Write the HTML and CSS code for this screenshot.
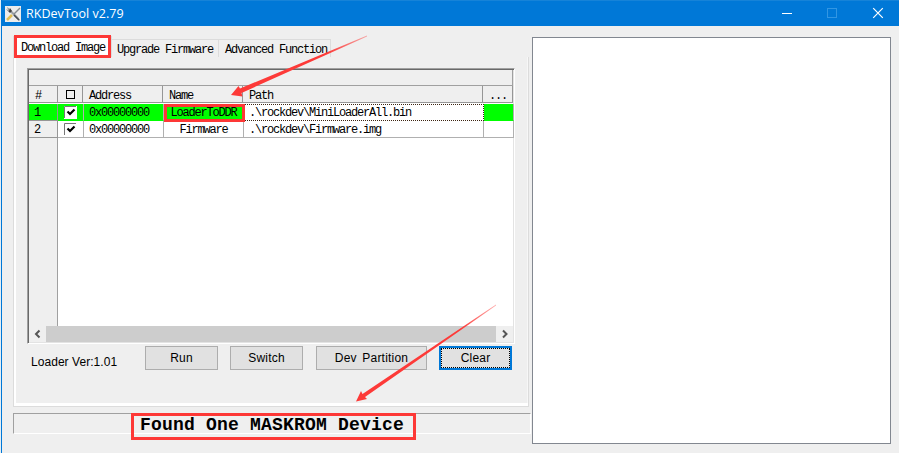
FILE: index.html
```html
<!DOCTYPE html>
<html lang="en">
<head>
<meta charset="utf-8">
<title>RKDevTool v2.79</title>
<link rel="stylesheet" href="styles.css">
</head>
<body>
<div class="window">
  <header class="titlebar">
    <svg class="app-icon" width="16" height="16" viewBox="0 0 16 16">
      <rect width="16" height="16" fill="#ececec"/>
      <path d="M2 1l1 3 9 9 2 2 1-1-2-3L5 3z" fill="#9a9ea1"/>
      <path d="M1 3l3 2 1-3 2 3-2 2z" fill="#444"/>
      <path d="M15 2l-6 6" stroke="#858b8f" stroke-width="1.5"/>
      <path d="M7 9l-5 5" stroke="#e0bd53" stroke-width="2.500"/>
      <path d="M9 9l5 5" stroke="#454b50" stroke-width="1.500"/>
    </svg>
    <span class="title">RKDevTool v2.79</span>
    <svg class="controls" width="138" height="26" viewBox="0 0 138 26">
      <path d="M21 13.5h10" stroke="#fff"/>
      <rect x="66.500" y="8.500" width="9" height="9" fill="none" stroke="#3296e3"/>
      <path d="M112.200 8.200l9.600 9.600M121.800 8.200l-9.600 9.600" stroke="#fff" stroke-width="1.200"/>
    </svg>
  </header>
  <main class="content">
    <section class="left">
      <nav class="tabs">
        <div class="tab active">Download Image</div>
        <div class="tab upgrade">Upgrade Firmware</div>
        <div class="tab advanced">Advanced Function</div>
      </nav>
      <div class="panel">
        <div class="list">
          <div class="banner"></div>
          <div class="row head">
            <div>#</div><div class="check"><i class="box"></i></div><div>Address</div><div>Name</div><div>Path</div><div>...</div>
          </div>
          <div class="row selected">
            <div>1</div>
            <div class="check"><svg width="13" height="13"><path d="M0 0h13v13H0z" fill="#fff"/><path d="M.5 12V.5H12" fill="none" stroke="#777"/><path d="M3.500 5.500L6 8l4.500-4.500" fill="none" stroke="#000" stroke-width="2.200"/></svg></div>
            <div>0x00000000</div><div class="name">LoaderToDDR</div><div class="focus">.\rockdev\MiniLoaderAll.bin</div><div></div>
          </div>
          <div class="row">
            <div>2</div>
            <div class="check"><svg width="13" height="13"><path d="M0 0h13v13H0z" fill="#fff"/><path d="M.5 12V.5H12" fill="none" stroke="#777"/><path d="M3.500 5.500L6 8l4.500-4.500" fill="none" stroke="#000" stroke-width="2.200"/></svg></div>
            <div>0x00000000</div><div class="name">Firmware</div><div>.\rockdev\Firmware.img</div><div></div>
          </div>
          <div class="empty"><div class="gutter"></div></div>
          <div class="scrollbar">
            <svg width="17" height="16"><path d="M10.500 4.500L7 8l3.500 3.500" fill="none" stroke="#555" stroke-width="2"/></svg>
            <div class="thumb"></div>
            <svg width="17" height="16"><path d="M7 4.500L10.500 8 7 11.500" fill="none" stroke="#555" stroke-width="2"/></svg>
          </div>
        </div>
        <div class="actions">
          <span class="version">Loader Ver:1.01</span>
          <button class="run">Run</button>
          <button class="switch">Switch</button>
          <button class="partition">Dev Partition</button>
          <button class="clear"><span>Clear</span></button>
        </div>
      </div>
      <footer class="status"><span>Found One MASKROM Device</span></footer>
    </section>
    <aside class="log"></aside>
  </main>
  <svg class="annotations" width="899" height="453" viewBox="0 0 899 453">
    <defs>
      <linearGradient id="fade1" gradientUnits="userSpaceOnUse" x1="367" y1="36" x2="327" y2="53"><stop stop-color="#fd3a38" stop-opacity=".4"/><stop offset="1" stop-color="#fd3a38"/></linearGradient>
      <linearGradient id="fade2" gradientUnits="userSpaceOnUse" x1="496" y1="305" x2="460" y2="329"><stop stop-color="#fd3a38" stop-opacity=".4"/><stop offset="1" stop-color="#fd3a38"/></linearGradient>
    </defs>
    <g fill="none" stroke="#fd3836" stroke-width="3">
      <rect x="15.500" y="36.500" width="94" height="20"/>
      <rect x="165.500" y="105.500" width="78" height="15"/>
      <rect x="132.500" y="414.500" width="282" height="24"/>
    </g>
    <path d="M367 35.500L240 88.500l-1.500-2.500L231 95l11.500 1.500-1-3.500L367 36.500z" fill="url(#fade1)"/>
    <path d="M496 304.500L362.500 394l-1.500-3-5 10.500 11-2.500-2-2L496 305.500z" fill="url(#fade2)"/>
  </svg>
</div>
</body>
</html>
```

FILE: styles.css
```css
* { box-sizing: border-box; }
body { margin: 0; background: #efefef; }
.window {
  position: relative;
  width: 899px;
  height: 453px;
  overflow: hidden;
  background: #efefef;
  border-left: 1px solid #e4eef5;
  box-shadow: inset 1px 0 #0078d7;
  font: 12px/18px "Liberation Mono", monospace;
  letter-spacing: -1.2px;
  color: #000;
}
.titlebar {
  display: flex;
  align-items: center;
  height: 26px;
  margin-left: 1px;
  padding-left: 3px;
  background: #0078d7;
  border-top: 1px solid #1683d8;
}
.title {
  flex: 1;
  margin-left: 5px;
  color: #fff;
  font: 12.5px/20px "Open Sans", sans-serif;
  letter-spacing: .04px;
}
.controls { margin: -1px 0 0 0; }
.content { display: flex; padding: 11px 8px 0 12px; }
.left { width: 519px; flex: none; }
.log {
  width: 359px;
  height: 407px;
  background: #fff;
  border: 1px solid #828790;
}
.tabs { display: flex; height: 20px; align-items: flex-end; }
.tab { height: 18px; border: 1px solid #dcdcdc; border-width: 1px 1px 0 0; white-space: nowrap; }
.tab.active { width: 99px; height: 21px; padding: 2px 0 0 7px; background: #fff; border-left-width: 1px; }
.tab.upgrade { width: 107px; padding: 1px 0 0 5px; }
.tab.advanced { width: 112px; padding: 1px 0 0 6px; }
.panel {
  width: 516px;
  height: 350px;
  padding: 11px 0 0 13px;
  border: 1px solid #dcdcdc;
  border-top: 0;
  box-shadow: inset 2px 0 #fff, inset 0 -3px #fff, inset -1px 0 #f7f7f7;
}
.list {
  width: 488px;
  height: 276px;
  border: 1px solid;
  border-color: #a0a0a0 #fff #fff #a0a0a0;
  box-shadow: inset 1px 1px #696969, inset -1px -1px #e3e3e3;
  background: #fff;
  padding: 1px 1px 1px 1px;
}
.banner { width: 484px; height: 16px; background: #efefef; border: 1px solid #a0a0a0; border-width: 0 1px 1px 0; }
.row { display: grid; grid-template-columns: 29px 26px 80px 80px 240px 30px; height: 17px; }
.row > div { border: 1px solid #b0b0b0; border-width: 0 1px 1px 0; padding-left: 5px; white-space: pre; overflow: hidden; }
.row > div:first-child { background: #efefef; border-color: #969696; }
.row.head { grid-template-columns: 29px 25px 80px 80px 240px 30px; height: 18px; border-bottom: 1px solid #fff; }
.row.head > div { background: #efefef; border-color: #969696; padding-left: 6px; line-height: 20px; }
.row > .check { display: flex; align-items: center; justify-content: center; padding: 0 1px 0 0; }
.row.head > .check { padding: 0; }
.box { width: 9px; height: 9px; border: 1px solid #000; }
.row.selected > div { background: #0f0; border-bottom-color: #0f0; }
.row.selected > div:first-child { border-bottom-color: #969696; }
.row > .name { text-align: center; padding: 0; }
.row.selected > .focus { background: #fff; border: 1px dotted #3d2512; padding-left: 4px; line-height: 16px; }
.empty { height: 188px; }
.gutter { width: 29px; height: 100%; background: #efefef; border-right: 1px solid #a0a0a0; }
.scrollbar { display: flex; height: 16px; background: #efefef; }
.thumb { flex: 1; background: #cdcdcd; }
.actions { display: flex; padding: 2px 0 0 4px; font: 12px/16px "Liberation Sans", sans-serif; letter-spacing: 0; }
.version { width: 114px; padding-top: 8px; letter-spacing: .05px; }
button {
  height: 24px;
  margin: 0;
  padding: 0;
  border: 1px solid #adadad;
  background: #e1e1e1;
  color: #000;
  font: 12px/22px "Liberation Sans", sans-serif;
  letter-spacing: .2px;
}
.run { width: 73px; }
.switch { width: 73px; margin-left: 12px; }
.partition { width: 111px; margin-left: 13px; word-spacing: 2px; }
.clear { width: 73px; margin-left: 12px; border: 2px solid #0078d7; }
.clear span { display: block; height: 20px; border: 1px dotted #000; line-height: 18px; }
.status {
  width: 518px;
  height: 21px;
  margin-top: 6px;
  padding-left: 126px;
  border: 1px solid;
  border-color: #a0a0a0 #fff #fff #a0a0a0;
  font: bold 18px/22px "Liberation Mono", monospace;
  letter-spacing: .2px;
  white-space: nowrap;
}
.annotations { position: absolute; left: -1px; top: 0; pointer-events: none; }
```
